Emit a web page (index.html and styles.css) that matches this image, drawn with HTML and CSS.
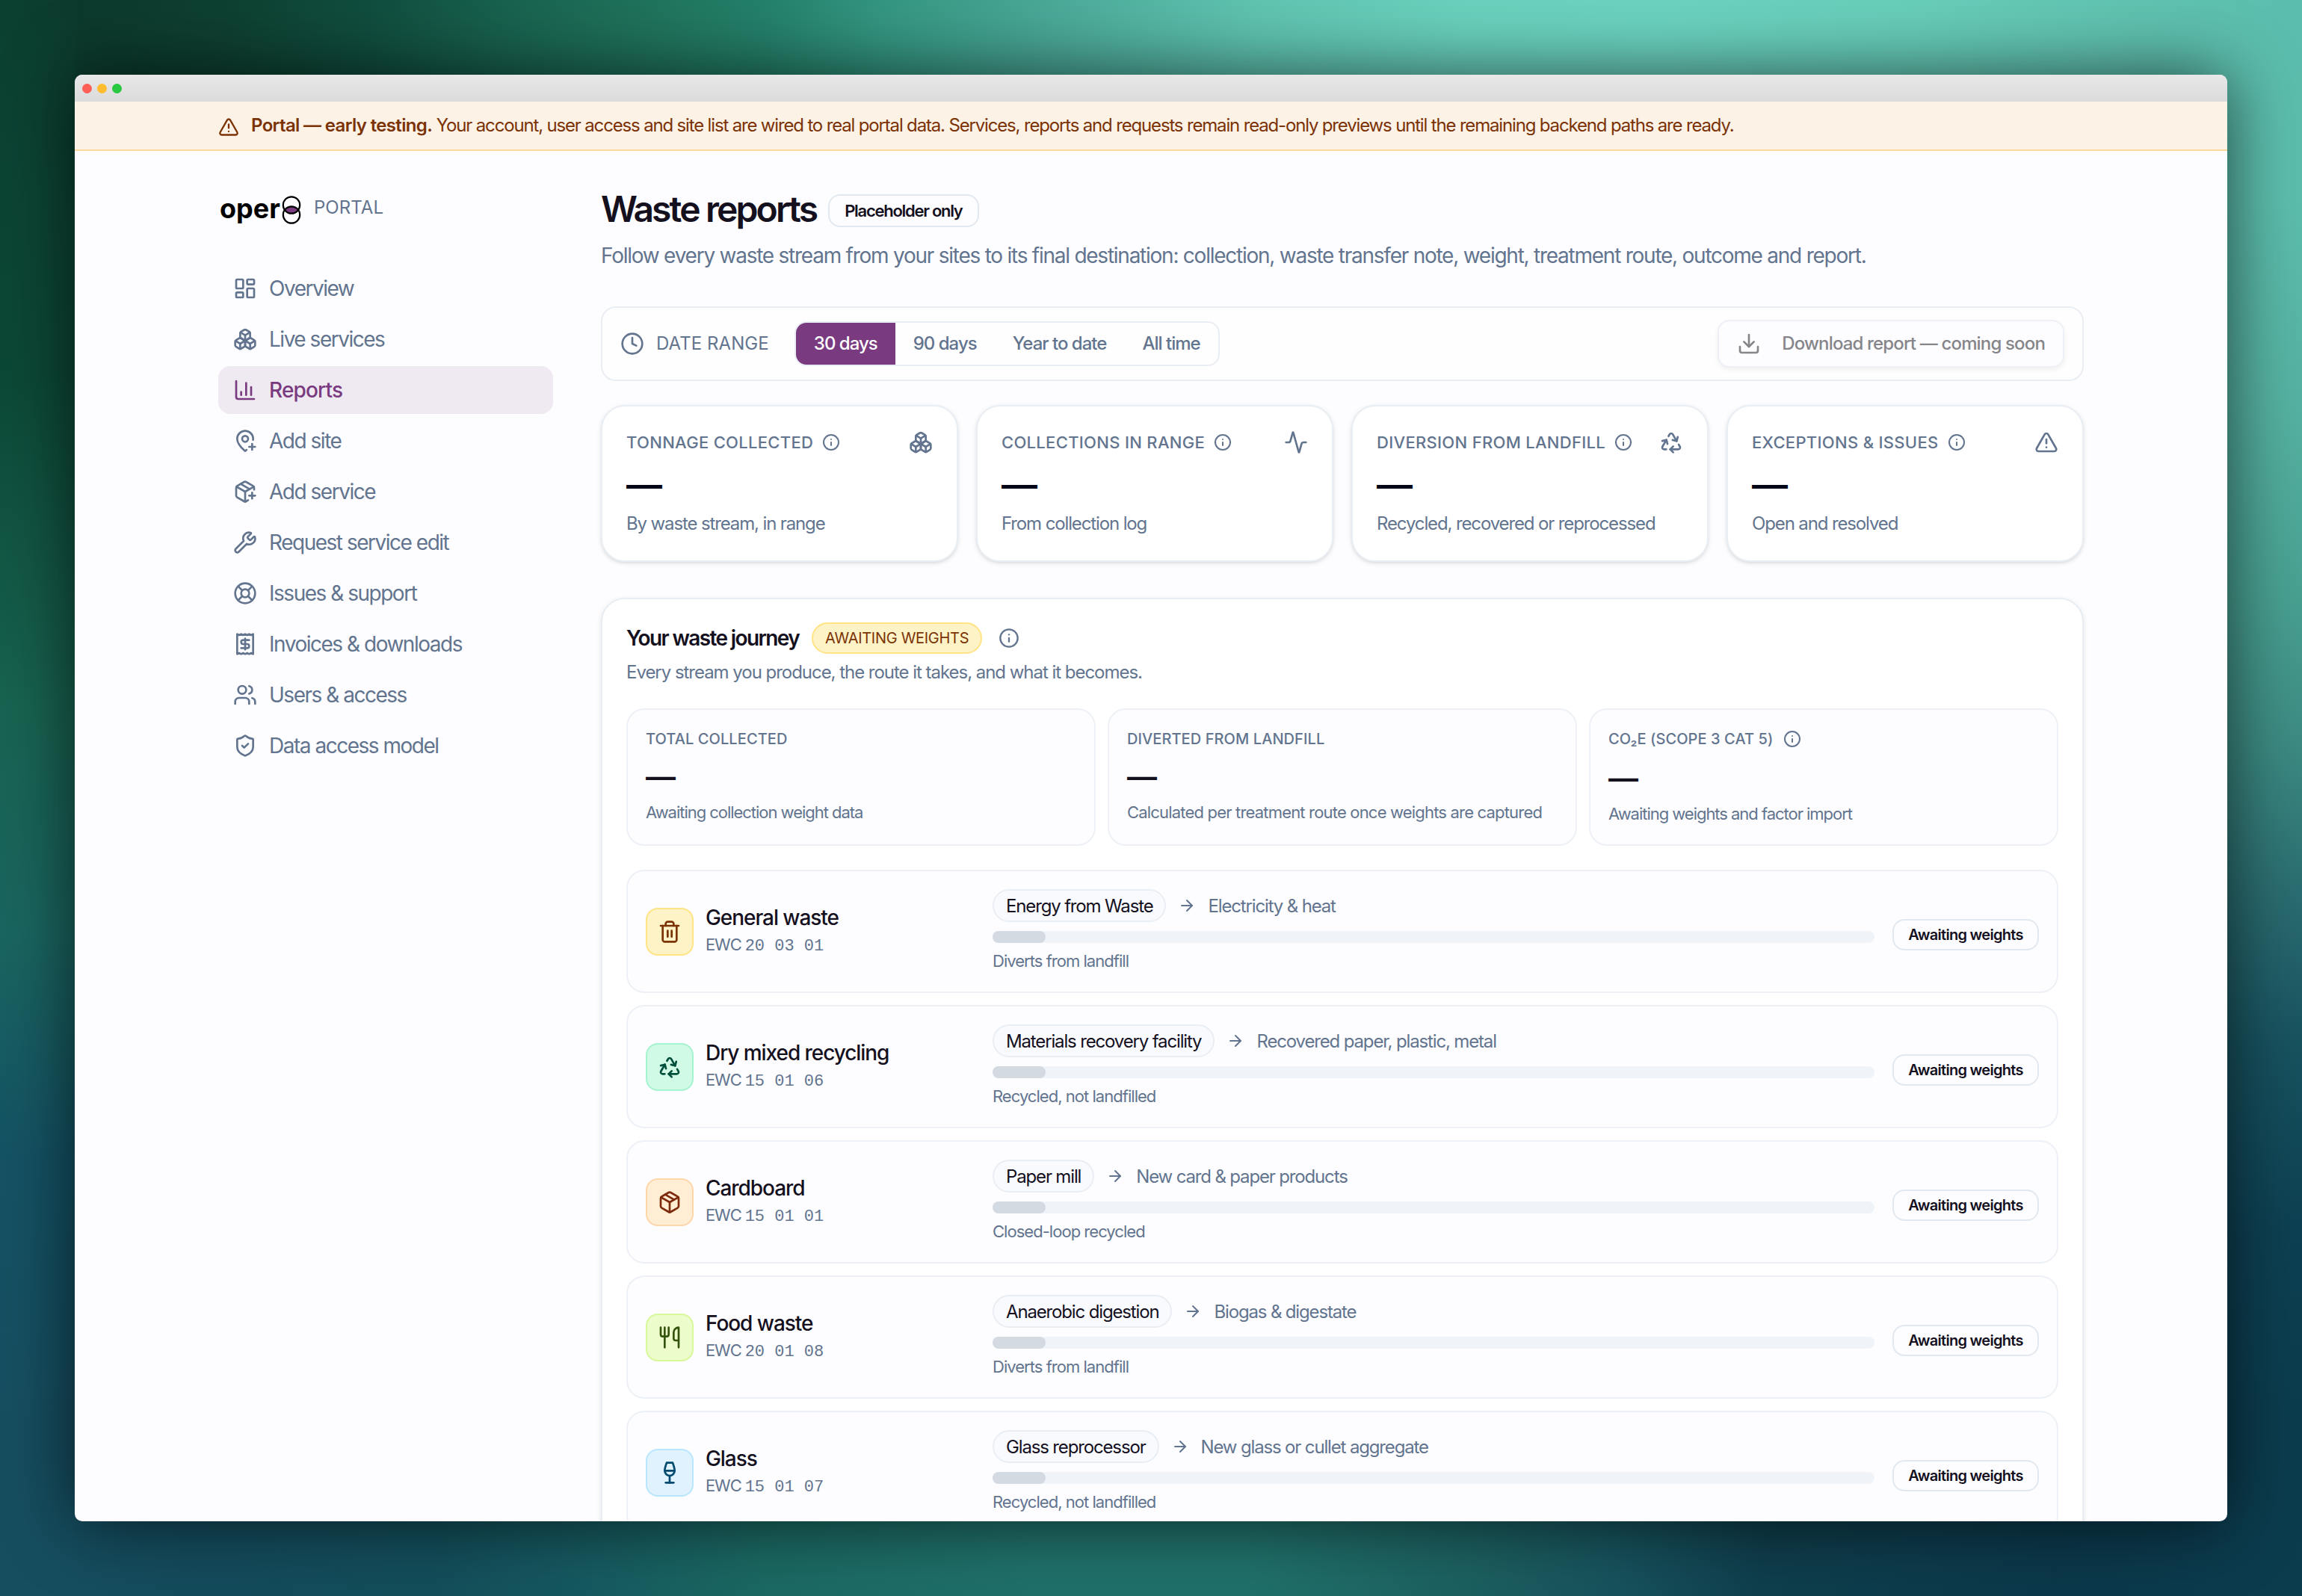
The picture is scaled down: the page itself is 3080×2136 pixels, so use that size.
FILE: index.html
```html
<!DOCTYPE html>
<html lang="en">
<head>
  <meta charset="UTF-8" />
  <title>Waste reports - oper8 Portal</title>
  <link rel="stylesheet" href="styles.css">
</head>
<body>
  <!-- Icon sprite -->
  <svg class="sprite" xmlns="http://www.w3.org/2000/svg">
    <symbol id="i-dashboard" viewBox="0 0 24 24"><rect x="3" y="3" width="7" height="9" rx="1"/><rect x="14" y="3" width="7" height="5" rx="1"/><rect x="14" y="12" width="7" height="9" rx="1"/><rect x="3" y="16" width="7" height="5" rx="1"/></symbol>
    <symbol id="i-boxes" viewBox="0 0 24 24"><path d="M2.97 12.92A2 2 0 0 0 2 14.63v3.24a2 2 0 0 0 .97 1.71l3 1.8a2 2 0 0 0 2.06 0L12 19v-5.5l-5-3-4.03 2.42Z"/><path d="m7 16.5-4.74-2.85"/><path d="m7 16.5 5-3"/><path d="M7 16.5v5.17"/><path d="M12 13.5V19l3.97 2.38a2 2 0 0 0 2.06 0l3-1.8a2 2 0 0 0 .97-1.71v-3.24a2 2 0 0 0-.97-1.71L17 10.5l-5 3Z"/><path d="m17 16.5-5-3"/><path d="m17 16.5 4.74-2.85"/><path d="M17 16.5v5.17"/><path d="M7.97 4.42A2 2 0 0 0 7 6.13v4.37l5 3 5-3V6.13a2 2 0 0 0-.97-1.71l-3-1.8a2 2 0 0 0-2.06 0l-3 1.8Z"/><path d="M12 8 7.26 5.15"/><path d="m12 8 4.74-2.85"/><path d="M12 13.5V8"/></symbol>
    <symbol id="i-chart" viewBox="0 0 24 24"><path d="M3 3v16a2 2 0 0 0 2 2h16"/><path d="M18 17V9"/><path d="M13 17V5"/><path d="M8 17v-3"/></symbol>
    <symbol id="i-pin" viewBox="0 0 24 24"><path d="M19.914 11.105A7.298 7.298 0 0 0 20 10a8 8 0 0 0-16 0c0 4.993 5.539 10.193 7.399 11.799a1 1 0 0 0 1.202 0 32 32 0 0 0 .824-.738"/><circle cx="12" cy="10" r="3"/><path d="M16 18h6"/><path d="M19 15v6"/></symbol>
    <symbol id="i-package-plus" viewBox="0 0 24 24"><path d="M16 16h6"/><path d="M19 13v6"/><path d="M21 10V8a2 2 0 0 0-1-1.73l-7-4a2 2 0 0 0-2 0l-7 4A2 2 0 0 0 3 8v8a2 2 0 0 0 1 1.73l7 4a2 2 0 0 0 2 0l2-1.14"/><path d="m7.5 4.27 9 5.15"/><path d="M3.29 7 12 12l8.71-5"/><path d="M12 22V12"/></symbol>
    <symbol id="i-wrench" viewBox="0 0 24 24"><path d="M14.7 6.3a1 1 0 0 0 0 1.4l1.6 1.6a1 1 0 0 0 1.4 0l3.106-3.105c.32-.322.863-.22.983.218a6 6 0 0 1-8.259 7.057l-7.91 7.91a1 1 0 0 1-2.999-3l7.91-7.91a6 6 0 0 1 7.057-8.259c.438.12.54.662.219.984z"/></symbol>
    <symbol id="i-buoy" viewBox="0 0 24 24"><circle cx="12" cy="12" r="10"/><path d="m4.93 4.93 4.24 4.24"/><path d="m14.83 9.17 4.24-4.24"/><path d="m14.83 14.83 4.24 4.24"/><path d="m9.17 14.83-4.24 4.24"/><circle cx="12" cy="12" r="4"/></symbol>
    <symbol id="i-receipt" viewBox="0 0 24 24"><path d="M4 2v20l2-1 2 1 2-1 2 1 2-1 2 1 2-1 2 1V2l-2 1-2-1-2 1-2-1-2 1-2-1-2 1Z"/><path d="M16 8h-6a2 2 0 1 0 0 4h4a2 2 0 1 1 0 4H8"/><path d="M12 17.5v-11"/></symbol>
    <symbol id="i-users" viewBox="0 0 24 24"><path d="M16 21v-2a4 4 0 0 0-4-4H6a4 4 0 0 0-4 4v2"/><circle cx="9" cy="7" r="4"/><path d="M22 21v-2a4 4 0 0 0-3-3.87"/><path d="M16 3.13a4 4 0 0 1 0 7.75"/></symbol>
    <symbol id="i-shield" viewBox="0 0 24 24"><path d="M20 13c0 5-3.5 7.5-7.66 8.95a1 1 0 0 1-.67-.01C7.5 20.5 4 18 4 13V6a1 1 0 0 1 1-1c2 0 4.5-1.2 6.24-2.72a1.17 1.17 0 0 1 1.52 0C14.51 3.81 17 5 19 5a1 1 0 0 1 1 1z"/><path d="m9 12 2 2 4-4"/></symbol>
    <symbol id="i-clock" viewBox="0 0 24 24"><circle cx="12" cy="12" r="10"/><path d="M12 6v6l4 2"/></symbol>
    <symbol id="i-download" viewBox="0 0 24 24"><path d="M12 15V3"/><path d="M21 15v4a2 2 0 0 1-2 2H5a2 2 0 0 1-2-2v-4"/><path d="m7 10 5 5 5-5"/></symbol>
    <symbol id="i-info" viewBox="0 0 24 24"><circle cx="12" cy="12" r="10"/><path d="M12 16v-4"/><path d="M12 8h.01"/></symbol>
    <symbol id="i-activity" viewBox="0 0 24 24"><path d="M22 12h-2.48a2 2 0 0 0-1.93 1.46l-2.35 8.36a.25.25 0 0 1-.48 0L9.24 2.18a.25.25 0 0 0-.48 0l-2.35 8.36A2 2 0 0 1 4.49 12H2"/></symbol>
    <symbol id="i-recycle" viewBox="0 0 24 24"><path d="M7 19H4.815a1.83 1.83 0 0 1-1.57-.881 1.785 1.785 0 0 1-.004-1.784L7.196 9.5"/><path d="M11 19h8.203a1.83 1.83 0 0 0 1.556-.89 1.784 1.784 0 0 0 0-1.775l-1.226-2.12"/><path d="m14 16-3 3 3 3"/><path d="M8.293 13.596 7.196 9.5 3.1 10.598"/><path d="m9.344 5.811 1.093-1.892A1.83 1.83 0 0 1 11.985 3a1.784 1.784 0 0 1 1.546.888l3.943 6.843"/><path d="m13.378 9.633 4.096 1.098 1.097-4.096"/></symbol>
    <symbol id="i-alert" viewBox="0 0 24 24"><path d="m21.73 18-8-14a2 2 0 0 0-3.48 0l-8 14A2 2 0 0 0 4 21h16a2 2 0 0 0 1.73-3"/><path d="M12 9v4"/><path d="M12 17h.01"/></symbol>
    <symbol id="i-trash" viewBox="0 0 24 24"><path d="M3 6h18"/><path d="M19 6v14c0 1-1 2-2 2H7c-1 0-2-1-2-2V6"/><path d="M8 6V4c0-1 1-2 2-2h4c1 0 2 1 2 2v2"/><path d="M10 11v6"/><path d="M14 11v6"/></symbol>
    <symbol id="i-package" viewBox="0 0 24 24"><path d="M11 21.73a2 2 0 0 0 2 0l7-4A2 2 0 0 0 21 16V8a2 2 0 0 0-1-1.73l-7-4a2 2 0 0 0-2 0l-7 4A2 2 0 0 0 3 8v8a2 2 0 0 0 1 1.73z"/><path d="M12 22V12"/><path d="M3.29 7 12 12l8.71-5"/><path d="m7.5 4.27 9 5.15"/></symbol>
    <symbol id="i-utensils" viewBox="0 0 24 24"><path d="M3 2v7c0 1.1.9 2 2 2h4a2 2 0 0 0 2-2V2"/><path d="M7 2v20"/><path d="M21 15V2a5 5 0 0 0-5 5v6c0 1.1.9 2 2 2h3Zm0 0v7"/></symbol>
    <symbol id="i-wine" viewBox="0 0 24 24"><path d="M8 22h8"/><path d="M7 10h10"/><path d="M12 15v7"/><path d="M12 15a5 5 0 0 0 5-5c0-2-.5-4-2-8H9c-1.5 4-2 6-2 8a5 5 0 0 0 5 5Z"/></symbol>
    <symbol id="i-arrow" viewBox="0 0 24 24"><path d="M5 12h14"/><path d="m12 5 7 7-7 7"/></symbol>
  </svg>

  <div class="window">
    <div class="titlebar">
      <span class="dot red"></span>
      <span class="dot yellow"></span>
      <span class="dot green"></span>
    </div>

    <!-- Testing notice -->
    <div class="notice">
      <svg class="icon icon-sm"><use href="#i-alert"/></svg>
      <p><strong>Portal — early testing.</strong> Your account, user access and site list are wired to real portal data. Services, reports and requests remain read-only previews until the remaining backend paths are ready.</p>
    </div>

    <div class="layout">
      <!-- Sidebar -->
      <aside class="sidebar">
        <div class="brand">
          <span class="brand-name">oper</span>
          <svg class="brand-mark" viewBox="0 0 26 40">
            <path class="lens" d="M3.4 20Q13 10.5 22.6 20Q13 29.5 3.4 20Z"/>
            <circle cx="13" cy="13.5" r="11.2"/>
            <circle cx="13" cy="26.5" r="11.2"/>
          </svg>
          <span class="brand-sub">PORTAL</span>
        </div>
        <nav>
          <a href="#"><svg class="icon"><use href="#i-dashboard"/></svg><span>Overview</span></a>
          <a href="#"><svg class="icon"><use href="#i-boxes"/></svg><span>Live services</span></a>
          <a href="#" class="active"><svg class="icon"><use href="#i-chart"/></svg><span>Reports</span></a>
          <a href="#"><svg class="icon"><use href="#i-pin"/></svg><span>Add site</span></a>
          <a href="#"><svg class="icon"><use href="#i-package-plus"/></svg><span>Add service</span></a>
          <a href="#"><svg class="icon"><use href="#i-wrench"/></svg><span>Request service edit</span></a>
          <a href="#"><svg class="icon"><use href="#i-buoy"/></svg><span>Issues &amp; support</span></a>
          <a href="#"><svg class="icon"><use href="#i-receipt"/></svg><span>Invoices &amp; downloads</span></a>
          <a href="#"><svg class="icon"><use href="#i-users"/></svg><span>Users &amp; access</span></a>
          <a href="#"><svg class="icon"><use href="#i-shield"/></svg><span>Data access model</span></a>
        </nav>
      </aside>

      <main>
        <!-- Page heading -->
        <div class="page-head">
          <h1>Waste reports</h1>
          <span class="badge badge-lg">Placeholder only</span>
        </div>
        <p class="lead">Follow every waste stream from your sites to its final destination: collection, waste transfer note, weight, treatment route, outcome and report.</p>

        <!-- Date range filter -->
        <div class="filters">
          <svg class="icon"><use href="#i-clock"/></svg>
          <span class="filters-label">DATE RANGE</span>
          <div class="segments">
            <button class="on">30 days</button>
            <button>90 days</button>
            <button>Year to date</button>
            <button>All time</button>
          </div>
          <button class="download" disabled><svg class="icon"><use href="#i-download"/></svg><span>Download report — coming soon</span></button>
        </div>

        <!-- Headline stats -->
        <div class="stats">
          <div class="stat">
            <div class="stat-head"><span>TONNAGE COLLECTED</span><svg class="icon icon-xs"><use href="#i-info"/></svg><svg class="icon end"><use href="#i-boxes"/></svg></div>
            <div class="stat-value">—</div>
            <div class="stat-note">By waste stream, in range</div>
          </div>
          <div class="stat">
            <div class="stat-head"><span>COLLECTIONS IN RANGE</span><svg class="icon icon-xs"><use href="#i-info"/></svg><svg class="icon end"><use href="#i-activity"/></svg></div>
            <div class="stat-value">—</div>
            <div class="stat-note">From collection log</div>
          </div>
          <div class="stat">
            <div class="stat-head"><span>DIVERSION FROM LANDFILL</span><svg class="icon icon-xs"><use href="#i-info"/></svg><svg class="icon end"><use href="#i-recycle"/></svg></div>
            <div class="stat-value">—</div>
            <div class="stat-note">Recycled, recovered or reprocessed</div>
          </div>
          <div class="stat">
            <div class="stat-head"><span>EXCEPTIONS &amp; ISSUES</span><svg class="icon icon-xs"><use href="#i-info"/></svg><svg class="icon end"><use href="#i-alert"/></svg></div>
            <div class="stat-value">—</div>
            <div class="stat-note">Open and resolved</div>
          </div>
        </div>

        <!-- Waste journey -->
        <section class="journey">
          <div class="journey-head">
            <h2>Your waste journey</h2>
            <span class="pill-warn">AWAITING WEIGHTS</span>
            <svg class="icon icon-sm"><use href="#i-info"/></svg>
          </div>
          <p class="journey-sub">Every stream you produce, the route it takes, and what it becomes.</p>

          <div class="totals">
            <div class="total">
              <div class="total-head"><span>TOTAL COLLECTED</span></div>
              <div class="total-value">—</div>
              <div class="total-note">Awaiting collection weight data</div>
            </div>
            <div class="total">
              <div class="total-head"><span>DIVERTED FROM LANDFILL</span></div>
              <div class="total-value">—</div>
              <div class="total-note wide">Calculated per treatment route once weights are captured</div>
            </div>
            <div class="total">
              <div class="total-head with-icon"><span>CO₂E (SCOPE 3 CAT 5)</span><svg class="icon icon-xs"><use href="#i-info"/></svg></div>
              <div class="total-value">—</div>
              <div class="total-note">Awaiting weights and factor import</div>
            </div>
          </div>

          <div class="streams">
            <div class="stream">
              <div class="stream-id">
                <div class="tile amber"><svg class="icon"><use href="#i-trash"/></svg></div>
                <div><h3>General waste</h3><p>EWC <code>20 03 01</code></p></div>
              </div>
              <div class="route">
                <div class="route-top"><span class="route-pill">Energy from Waste</span><svg class="icon icon-xs"><use href="#i-arrow"/></svg><span>Electricity &amp; heat</span></div>
                <div class="bar"><div class="bar-fill"></div></div>
                <div class="route-note">Diverts from landfill</div>
              </div>
              <span class="badge">Awaiting weights</span>
            </div>
            <div class="stream">
              <div class="stream-id">
                <div class="tile emerald"><svg class="icon"><use href="#i-recycle"/></svg></div>
                <div><h3>Dry mixed recycling</h3><p>EWC <code>15 01 06</code></p></div>
              </div>
              <div class="route">
                <div class="route-top"><span class="route-pill">Materials recovery facility</span><svg class="icon icon-xs"><use href="#i-arrow"/></svg><span>Recovered paper, plastic, metal</span></div>
                <div class="bar"><div class="bar-fill"></div></div>
                <div class="route-note">Recycled, not landfilled</div>
              </div>
              <span class="badge">Awaiting weights</span>
            </div>
            <div class="stream">
              <div class="stream-id">
                <div class="tile orange"><svg class="icon"><use href="#i-package"/></svg></div>
                <div><h3>Cardboard</h3><p>EWC <code>15 01 01</code></p></div>
              </div>
              <div class="route">
                <div class="route-top"><span class="route-pill">Paper mill</span><svg class="icon icon-xs"><use href="#i-arrow"/></svg><span>New card &amp; paper products</span></div>
                <div class="bar"><div class="bar-fill"></div></div>
                <div class="route-note">Closed-loop recycled</div>
              </div>
              <span class="badge">Awaiting weights</span>
            </div>
            <div class="stream">
              <div class="stream-id">
                <div class="tile lime"><svg class="icon"><use href="#i-utensils"/></svg></div>
                <div><h3>Food waste</h3><p>EWC <code>20 01 08</code></p></div>
              </div>
              <div class="route">
                <div class="route-top"><span class="route-pill">Anaerobic digestion</span><svg class="icon icon-xs"><use href="#i-arrow"/></svg><span>Biogas &amp; digestate</span></div>
                <div class="bar"><div class="bar-fill"></div></div>
                <div class="route-note">Diverts from landfill</div>
              </div>
              <span class="badge">Awaiting weights</span>
            </div>
            <div class="stream">
              <div class="stream-id">
                <div class="tile sky"><svg class="icon"><use href="#i-wine"/></svg></div>
                <div><h3>Glass</h3><p>EWC <code>15 01 07</code></p></div>
              </div>
              <div class="route">
                <div class="route-top"><span class="route-pill">Glass reprocessor</span><svg class="icon icon-xs"><use href="#i-arrow"/></svg><span>New glass or cullet aggregate</span></div>
                <div class="bar"><div class="bar-fill"></div></div>
                <div class="route-note">Recycled, not landfilled</div>
              </div>
              <span class="badge">Awaiting weights</span>
            </div>
          </div>
        </section>
      </main>
    </div>
  </div>
</body>
</html>
```

FILE: styles.css
```css
/* ---- Global ---- */
* {
  box-sizing: border-box;
}
html, body {
  margin: 0;
  padding: 0;
  overflow: hidden;
}
body {
  width: 3080px;
  height: 2136px;
  padding: 100px;
  font-family: Inter, sans-serif;
  font-size: 24px;
  letter-spacing: -0.047em;
  color: #14101e;
  /* backdrop: left, right, top, bottom bands */
  background:
    linear-gradient(180deg, transparent 20px, #0c4434 260px, #0c4836 500px, #186351 950px, #1a6560 1250px, #145264 1550px, #164e60 1900px, transparent 2120px) left / 101px 100% no-repeat,
    linear-gradient(180deg, transparent 20px, #5cbdac 270px, #55b1a1 550px, #48a091 800px, #3c8a82 1000px, #2a6c70 1200px, #17525f 1400px, #0d4052 1650px, #0b3c4e 1900px, transparent 2120px) right / 101px 100% no-repeat,
    linear-gradient(90deg, #0b4030 0, #0c3a2d 120px, #0e4031 300px, #104d3e 490px, #196350 690px, #20745d 880px, #24806a 1020px, #349680 1180px, #4aa897 1400px, #5fc3b0 1680px, #69d1bd 1960px, #6bd3c0 2220px, #67cdb9 2560px, #60c2b0 2850px, #5bbdad 3080px) top / 100% 50% no-repeat,
    linear-gradient(90deg, #164e60 0, #144b5c 300px, #134e5a 590px, #165a60 790px, #1b6862 1020px, #20706a 1380px, #20706a 1670px, #1c6060 1960px, #17525c 2160px, #0f3e4c 2360px, #0b384a 2750px, #0b3c4e 3080px) bottom / 100% 50% no-repeat;
}
h1, h2, h3, p {
  margin: 0;
}
button {
  font: inherit;
  letter-spacing: inherit;
  color: inherit;
  border: 0;
  background: none;
  padding: 0;
}
.sprite {
  display: none;
}
.icon {
  width: 32px;
  height: 32px;
  flex: none;
  fill: none;
  stroke: currentColor;
  stroke-width: 2;
  stroke-linecap: round;
  stroke-linejoin: round;
}
.icon-sm {
  width: 28px;
  height: 28px;
}
.icon-xs {
  width: 24px;
  height: 24px;
}

/* ---- Window ---- */
.window {
  width: 2880px;
  height: 1936px;
  border-radius: 10px;
  overflow: hidden;
  background: #fdfdff;
  box-shadow: 0 0 90px rgba(0, 0, 0, 0.65);
}
.titlebar {
  display: flex;
  align-items: center;
  gap: 7px;
  height: 36px;
  padding-left: 10px;
  background: linear-gradient(#e8e8e8, #dbdbdb);
}
.dot {
  width: 13px;
  height: 13px;
  border-radius: 50%;
}
.red { background: #ff5f57; }
.yellow { background: #febc2e; }
.green { background: #28c840; }

.notice {
  display: flex;
  align-items: center;
  gap: 16px;
  height: 66px;
  padding: 0 192px;
  background: #fcf2e6;
  border-bottom: 2px solid #fcd89a;
  color: #7b3306;
  letter-spacing: -0.0485em;
  white-space: nowrap;
}
.notice .icon {
  margin-top: 4px;
}
.notice p {
  margin-bottom: 1px;
}
.notice strong {
  font-weight: 600;
  letter-spacing: -0.027em;
}

/* ---- Layout ---- */
.layout {
  display: flex;
  gap: 64px;
  padding: 48px 192px 0;
}
.sidebar {
  width: 448px;
  flex: none;
}
main {
  width: 1984px;
  flex: none;
}

/* ---- Sidebar ---- */
.brand {
  display: flex;
  align-items: center;
  height: 62px;
  padding: 0 2px;
  margin-bottom: 42px;
}
.brand-name {
  margin-bottom: 5px;
  font-size: 36px;
  font-weight: 700;
  line-height: 40px;
  letter-spacing: 0;
  color: #000;
}
.brand-mark {
  width: 26px;
  height: 40px;
  margin-left: 2px;
  fill: none;
  stroke: #000;
  stroke-width: 2.2;
}
.brand-mark .lens {
  fill: #7a3b80;
  stroke: none;
}
.brand-sub {
  margin: 0 0 8px 17px;
  letter-spacing: 0.004em;
  color: #62748e;
}
nav {
  display: flex;
  flex-direction: column;
  gap: 4px;
}
nav a {
  display: flex;
  align-items: center;
  gap: 16px;
  height: 64px;
  padding: 0 20px;
  border-radius: 16px;
  font-size: 28px;
  letter-spacing: -0.053em;
  color: #62748e;
  text-decoration: none;
}
nav a.active {
  background: #efeaf1;
  color: #793a80;
  font-weight: 500;
  letter-spacing: -0.03em;
}

/* ---- Heading ---- */
.page-head {
  display: flex;
  align-items: center;
  gap: 16px;
  height: 64px;
}
h1 {
  margin-bottom: 4px;
  font-size: 48px;
  font-weight: 600;
  line-height: 64px;
  letter-spacing: -0.06em;
}
.badge {
  display: flex;
  align-items: center;
  justify-content: center;
  height: 42px;
  padding: 0 20px;
  border: 2px solid #e2e8f0;
  border-radius: 16px;
  font-size: 20px;
  font-weight: 600;
  letter-spacing: -0.036em;
  white-space: nowrap;
}
.badge-lg {
  height: 44px;
  font-size: 22px;
  letter-spacing: -0.058em;
}
.lead {
  margin-top: 6px;
  font-size: 28px;
  line-height: 44px;
  letter-spacing: -0.0445em;
  color: #62748e;
  white-space: nowrap;
}

/* ---- Filters ---- */
.filters {
  display: flex;
  align-items: center;
  height: 100px;
  margin-top: 46px;
  padding: 0 24px;
  border: 2px solid #e9eef4;
  border-radius: 20px;
  background: #fefeff;
  color: #62748e;
}
.filters-label {
  margin: 0 34px 2px 16px;
  letter-spacing: 0.003em;
}
.segments {
  display: flex;
  height: 60px;
  border: 2px solid #e9eef4;
  border-radius: 16px;
  overflow: hidden;
  font-weight: 500;
  letter-spacing: -0.041em;
}
.segments button {
  padding: 0 24px 2px;
}
.segments .on {
  background: #793a80;
  color: #fff;
}
.download {
  display: flex;
  align-items: center;
  gap: 28px;
  height: 64px;
  margin-left: auto;
  padding: 0 24px;
  border: 2px solid #edf1f7;
  border-radius: 16px;
  background: #fdfdff;
  box-shadow: 0 3px 6px rgba(0, 0, 0, 0.06);
  font-weight: 500;
  letter-spacing: -0.035em;
  color: #85858a;
}
.download span {
  margin-bottom: 2px;
}

/* ---- Stats ---- */
.stats {
  display: grid;
  grid-template-columns: repeat(4, 1fr);
  gap: 24px;
  margin-top: 32px;
}
.stat {
  height: 210px;
  padding: 32px;
  border: 2px solid #e9eef4;
  border-radius: 32px;
  background: #fff;
  box-shadow: 0 2px 6px rgba(0, 0, 0, 0.1), 0 2px 4px -2px rgba(0, 0, 0, 0.1);
  color: #62748e;
}
.stat-head {
  display: flex;
  align-items: center;
  gap: 12px;
  height: 32px;
  font-size: 22px;
  font-weight: 500;
  letter-spacing: 0.014em;
  white-space: nowrap;
}
.end {
  margin-left: auto;
}
.stat-value {
  margin-top: 9px;
  font-size: 48px;
  font-weight: 600;
  line-height: 64px;
  letter-spacing: 0;
  color: #020618;
}
.stat-note {
  margin-top: 4px;
  line-height: 32px;
  white-space: nowrap;
}

/* ---- Journey ---- */
.journey {
  margin-top: 48px;
  padding: 30px 32px;
  border: 2px solid #e9eef4;
  border-radius: 32px;
  background: #fff;
  box-shadow: 0 2px 6px rgba(0, 0, 0, 0.1);
}
.journey-head {
  display: flex;
  align-items: center;
  height: 44px;
}
h2 {
  font-size: 28px;
  font-weight: 600;
  letter-spacing: -0.058em;
}
.pill-warn {
  display: flex;
  align-items: center;
  height: 42px;
  margin: 0 22px 0 17px;
  padding: 0 16px;
  border: 2px solid #ffe485;
  border-radius: 21px;
  background: #fef3c6;
  font-size: 20px;
  letter-spacing: -0.015em;
  color: #7b3306;
}
.journey-head .icon {
  color: #62748e;
}
.journey-sub {
  margin-top: 8px;
  line-height: 32px;
  letter-spacing: -0.043em;
  color: #62748e;
}
.totals {
  display: grid;
  grid-template-columns: repeat(3, 1fr);
  gap: 16px;
  margin-top: 32px;
}
.total {
  height: 184px;
  padding: 24px;
  border: 2px solid #edf1f7;
  border-radius: 24px;
  background: #fdfdff;
  color: #62748e;
}
.total-head {
  display: flex;
  align-items: center;
  gap: 14px;
  height: 30px;
  font-size: 20px;
  font-weight: 500;
  letter-spacing: 0.004em;
}
.total-head.with-icon {
  margin-bottom: 2px;
}
.total-value {
  padding-top: 8px;
  font-size: 40px;
  font-weight: 600;
  line-height: 56px;
  letter-spacing: 0;
  color: #14101e;
}
.total-note {
  margin-top: 2px;
  font-size: 22px;
  line-height: 34px;
  letter-spacing: -0.047em;
  white-space: nowrap;
}
.total-note.wide {
  letter-spacing: -0.037em;
}

/* ---- Streams ---- */
.streams {
  display: flex;
  flex-direction: column;
  gap: 16px;
  margin-top: 32px;
}
.stream {
  display: grid;
  grid-template-columns: 440px 1180px 196px;
  column-gap: 24px;
  align-items: center;
  padding: 24px;
  border: 2px solid #edf1f7;
  border-radius: 24px;
  background: #fdfdff;
}
.stream .badge {
  margin-top: 8px;
  padding: 0;
}
.stream-id {
  display: flex;
  align-items: center;
  gap: 16px;
}
.stream-id h3 {
  font-size: 28px;
  font-weight: 500;
  line-height: 36px;
  letter-spacing: -0.038em;
}
.stream-id p {
  margin: 2px 0 1px;
  font-size: 22px;
  line-height: 33px;
  color: #62748e;
}
code {
  font-family: "Liberation Mono", monospace;
  font-size: 22px;
  letter-spacing: 0;
}
.tile {
  display: grid;
  place-items: center;
  width: 64px;
  height: 64px;
  border: 2px solid;
  border-radius: 16px;
}
.amber { background: #fef3c6; border-color: #ffe485; color: #7b3306; }
.emerald { background: #d0fae5; border-color: #a4f4cf; color: #004f3b; }
.orange { background: #ffedd4; border-color: #ffd6a8; color: #7e2a0c; }
.lime { background: #ecfcca; border-color: #d8f999; color: #35530e; }
.sky { background: #dff2fe; border-color: #b8e6fe; color: #024a70; }
.route-top {
  display: flex;
  align-items: center;
  gap: 16px;
  height: 44px;
  letter-spacing: -0.048em;
  color: #62748e;
}
.route-pill {
  display: flex;
  align-items: center;
  height: 44px;
  padding: 0 16px;
  border: 2px solid #e9eef5;
  border-radius: 22px;
  background: #f9fafe;
  color: #14101e;
}
.bar {
  height: 16px;
  margin-top: 12px;
  border-radius: 8px;
  background: #f0f4f9;
}
.bar-fill {
  width: 6%;
  height: 16px;
  border-radius: 8px;
  background: #d3dae2;
}
.route-note {
  margin-top: 8px;
  font-size: 22px;
  line-height: 33px;
  letter-spacing: -0.044em;
  color: #62748e;
}
```
